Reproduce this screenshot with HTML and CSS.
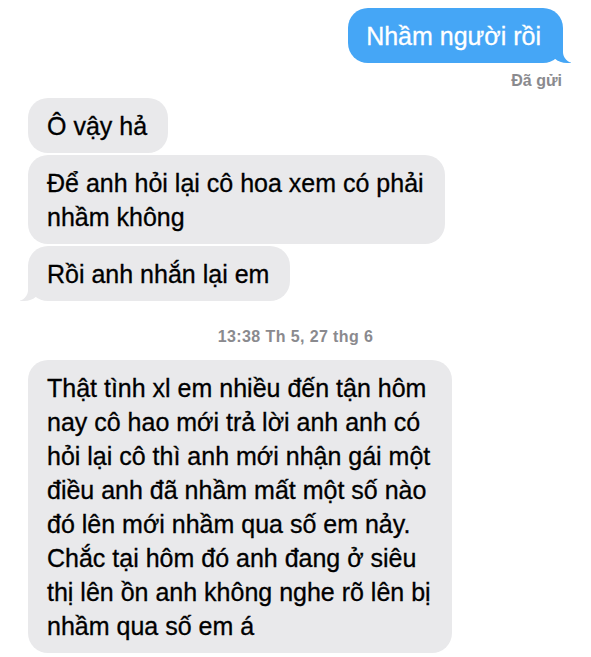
FILE: index.html
```html
<!DOCTYPE html>
<html lang="vi">
<head>
<meta charset="utf-8">
<title>Tin nhắn</title>
<link rel="stylesheet" href="styles.css">
</head>
<body>
<div class="chat">
  <div class="bubble me tail-right">Nhầm người rồi</div>
  <div class="status">Đã gửi</div>
  <div class="group">
    <div class="bubble them">Ô vậy hả</div>
    <div class="bubble them">Để anh hỏi lại cô hoa xem có phải<br>nhầm không</div>
    <div class="bubble them tail-left">Rồi anh nhắn lại em</div>
  </div>
  <div class="time">13:38 Th 5, 27 thg 6</div>
  <div class="bubble them big">Thật tình xl em nhiều đến tận hôm<br>nay cô hao mới trả lời anh anh có<br>hỏi lại cô thì anh mới nhận gái một<br>điều anh đã nhầm mất một số nào<br>đó lên mới nhầm qua số em nảy.<br>Chắc tại hôm đó anh đang ở siêu<br>thị lên ồn anh không nghe rõ lên bị<br>nhầm qua số em á</div>
</div>
</body>
</html>
```

FILE: styles.css
```css
html, body {
  margin: 0;
  padding: 0;
  background: #ffffff;
}

body {
  font-family: "Liberation Sans", Arial, sans-serif;
  width: 591px;
  height: 657px;
  overflow: hidden;
}

.chat {
  display: flex;
  flex-direction: column;
  padding: 8px 28px 0 28px;
}

.bubble {
  position: relative;
  font-size: 25px;
  line-height: 34px;
  padding: 10.5px 21px 10.5px 19px;
  border-radius: 20px;
  white-space: nowrap;
  -webkit-text-stroke: 0.3px currentColor;
}

.me {
  align-self: flex-end;
  background: #45a6f6;
  color: #ffffff;
  padding-left: 18px;
  padding-right: 22px;
}

.them {
  align-self: flex-start;
  background: #e9e9eb;
  color: #000000;
}

.group {
  display: flex;
  flex-direction: column;
  gap: 2px;
  margin-top: 8px;
}

.status {
  align-self: flex-end;
  margin-top: 8px;
  margin-right: 1px;
  font-size: 16px;
  line-height: 19px;
  font-weight: bold;
  color: #8a8a8e;
}

.time {
  align-self: center;
  margin-top: 26px;
  font-size: 16px;
  line-height: 20px;
  font-weight: bold;
  letter-spacing: 0.4px;
  color: #8a8a8e;
}

.big {
  margin-top: 13px;
}

.tail-right::before {
  content: "";
  position: absolute;
  bottom: 0;
  right: -8px;
  width: 22px;
  height: 22px;
  background: #45a6f6;
  border-bottom-left-radius: 18px 16px;
}

.tail-right::after {
  content: "";
  position: absolute;
  bottom: 0;
  right: -11px;
  width: 11px;
  height: 22px;
  background: #ffffff;
  border-bottom-left-radius: 11px;
}

.tail-left::before {
  content: "";
  position: absolute;
  bottom: 0;
  left: -8px;
  width: 22px;
  height: 22px;
  background: #e9e9eb;
  border-bottom-right-radius: 18px 16px;
}

.tail-left::after {
  content: "";
  position: absolute;
  bottom: 0;
  left: -11px;
  width: 11px;
  height: 22px;
  background: #ffffff;
  border-bottom-right-radius: 11px;
}
```
